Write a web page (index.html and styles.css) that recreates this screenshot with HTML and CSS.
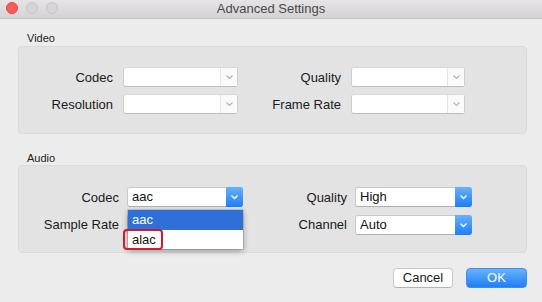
FILE: index.html
```html
<!DOCTYPE html>
<html>
<head>
<meta charset="utf-8">
<link rel="stylesheet" href="styles.css">
</head>
<body>
<div class="window">
  <div class="titlebar">
    <div class="lights">
      <span class="light red"></span>
      <span class="light gray"></span>
      <span class="light gray"></span>
    </div>
    <div class="title">Advanced Settings</div>
  </div>
  <div class="content">
    <div class="group-label">Video</div>
    <div class="group video">
      <div class="grid vgrid">
        <div class="lbl">Codec</div>
        <div class="sel empty"><span class="val"></span><span class="arr"><svg width="9" height="6" viewBox="0 0 9 6"><path d="M1.5 1.5 L4.5 4.5 L7.5 1.5" fill="none" stroke="#b4b4b4" stroke-width="1.2"/></svg></span></div>
        <div class="lbl">Quality</div>
        <div class="sel empty"><span class="val"></span><span class="arr"><svg width="9" height="6" viewBox="0 0 9 6"><path d="M1.5 1.5 L4.5 4.5 L7.5 1.5" fill="none" stroke="#b4b4b4" stroke-width="1.2"/></svg></span></div>
        <div class="lbl">Resolution</div>
        <div class="sel empty"><span class="val"></span><span class="arr"><svg width="9" height="6" viewBox="0 0 9 6"><path d="M1.5 1.5 L4.5 4.5 L7.5 1.5" fill="none" stroke="#b4b4b4" stroke-width="1.2"/></svg></span></div>
        <div class="lbl">Frame Rate</div>
        <div class="sel empty"><span class="val"></span><span class="arr"><svg width="9" height="6" viewBox="0 0 9 6"><path d="M1.5 1.5 L4.5 4.5 L7.5 1.5" fill="none" stroke="#b4b4b4" stroke-width="1.2"/></svg></span></div>
      </div>
    </div>
    <div class="group-label audio-label">Audio</div>
    <div class="group audio">
      <div class="grid agrid">
        <div class="lbl">Codec</div>
        <div class="sel blue codec"><span class="val">aac</span><span class="arr"><svg width="9" height="6" viewBox="0 0 9 6"><path d="M1.5 1.5 L4.5 4.5 L7.5 1.5" fill="none" stroke="#fff" stroke-width="1.3"/></svg></span>
          <div class="popup">
            <div class="opt hl">aac</div>
            <div class="opt">alac</div>
            <div class="mark"></div>
          </div>
        </div>
        <div class="lbl">Quality</div>
        <div class="sel blue"><span class="val">High</span><span class="arr"><svg width="9" height="6" viewBox="0 0 9 6"><path d="M1.5 1.5 L4.5 4.5 L7.5 1.5" fill="none" stroke="#fff" stroke-width="1.3"/></svg></span></div>
        <div class="lbl">Sample Rate</div>
        <div class="sel blue"><span class="val"></span><span class="arr"><svg width="9" height="6" viewBox="0 0 9 6"><path d="M1.5 1.5 L4.5 4.5 L7.5 1.5" fill="none" stroke="#fff" stroke-width="1.3"/></svg></span></div>
        <div class="lbl">Channel</div>
        <div class="sel blue"><span class="val">Auto</span><span class="arr"><svg width="9" height="6" viewBox="0 0 9 6"><path d="M1.5 1.5 L4.5 4.5 L7.5 1.5" fill="none" stroke="#fff" stroke-width="1.3"/></svg></span></div>
      </div>
    </div>
    <div class="buttons">
      <div class="btn cancel">Cancel</div>
      <div class="btn ok">OK</div>
    </div>
  </div>
</div>
</body>
</html>
```
FILE: styles.css
```css
* { box-sizing: border-box; }
html, body { margin: 0; padding: 0; }
body {
  width: 542px;
  height: 302px;
  overflow: hidden;
  background: #ececec;
  font-family: "Liberation Sans", Arial, sans-serif;
  color: #1a1a1a;
}
.window { width: 542px; height: 302px; }
.titlebar {
  height: 19px;
  background: linear-gradient(#e6e4e6, #d4d2d4);
  border-bottom: 1px solid #c4c2c4;
  position: relative;
  display: flex;
  align-items: center;
  justify-content: center;
}
.lights {
  position: absolute;
  left: 6px;
  top: 2px;
  display: flex;
  gap: 8px;
}
.light {
  width: 12px;
  height: 12px;
  border-radius: 50%;
}
.light.red { background: #fc5b57; border: 1px solid #e2463f; }
.light.gray { background: #d6d4d6; border: 1px solid #c6c4c6; }
.title {
  font-size: 13px;
  color: #4a4a4a;
  margin-top: -2px;
}
.content {
  padding: 0 15px 0 18px;
}
.group-label {
  font-size: 11px;
  color: #222;
  padding-left: 9px;
  height: 27px;
  padding-top: 13px;
}
.audio-label { height: 31px; padding-top: 18px; }
.group {
  background: #e3e3e3;
  border: 1px solid #dadada;
  border-radius: 4px;
  height: 88px;
}
.grid {
  display: grid;
  align-items: center;
}
.vgrid {
  grid-template-columns: 94px 115px 93px 114px;
  column-gap: 10px;
  row-gap: 7px;
  padding-top: 20px;
  grid-template-rows: 20px 20px;
}
.agrid {
  grid-template-columns: 100px 116px 96px 117px;
  column-gap: 8px;
  row-gap: 7px;
  padding-top: 21px;
  grid-template-rows: 20px 21px;
}
.lbl {
  font-size: 13px;
  text-align: right;
  color: #1a1a1a;
}
.sel {
  height: 20px;
  display: flex;
  background: #fff;
  border: 1px solid #cfcfcf;
  border-top-color: #d8d8d8;
  border-bottom-color: #bdbdbd;
  border-radius: 3px;
  position: relative;
}
.sel .val {
  flex: 1;
  font-size: 13px;
  line-height: 18px;
  padding-left: 4px;
  color: #111;
}
.sel .arr {
  width: 17px;
  display: flex;
  align-items: center;
  justify-content: center;
}
.sel.empty .arr {
  border-left: 1px solid #e6e6e6;
  background: #fafafa;
}
.sel.blue { border-color: #c8c8c8; border-bottom-color: #b0b0b0; }
.sel.blue .arr {
  background: linear-gradient(#68b1fa, #1c7ef6);
  margin: -1px -1px -1px 0;
  border-radius: 0 3px 3px 0;
  width: 17px;
}
.popup {
  position: absolute;
  top: 22px;
  left: 0;
  width: 115px;
  height: 39px;
  background: #fff;
  box-shadow: 0 2px 6px rgba(0,0,0,0.35), 0 0 0 1px rgba(0,0,0,0.12);
  z-index: 5;
}
.opt {
  height: 19px;
  font-size: 13px;
  line-height: 19px;
  padding-left: 4px;
  color: #111;
}
.opt.hl {
  background: #2f6fd8;
  color: #fff;
  height: 20px;
  line-height: 19px;
}
.mark {
  position: absolute;
  left: -5px;
  top: 19px;
  width: 40px;
  height: 21px;
  border: 2px solid #cf1b2e;
  border-radius: 4px;
}
.buttons {
  display: flex;
  justify-content: flex-end;
  gap: 13px;
  margin-top: 15px;
  padding-right: 0;
}
.btn {
  height: 20px;
  font-size: 13px;
  line-height: 18px;
  text-align: center;
  border-radius: 4px;
}
.cancel {
  width: 60px;
  background: #fff;
  border: 1px solid #c8c8c8;
  border-bottom-color: #b4b4b4;
  color: #1a1a1a;
}
.ok {
  width: 61px;
  background: linear-gradient(#69b1fa, #1e80f7);
  border: 1px solid #3d8ef0;
  color: #fff;
}
```
